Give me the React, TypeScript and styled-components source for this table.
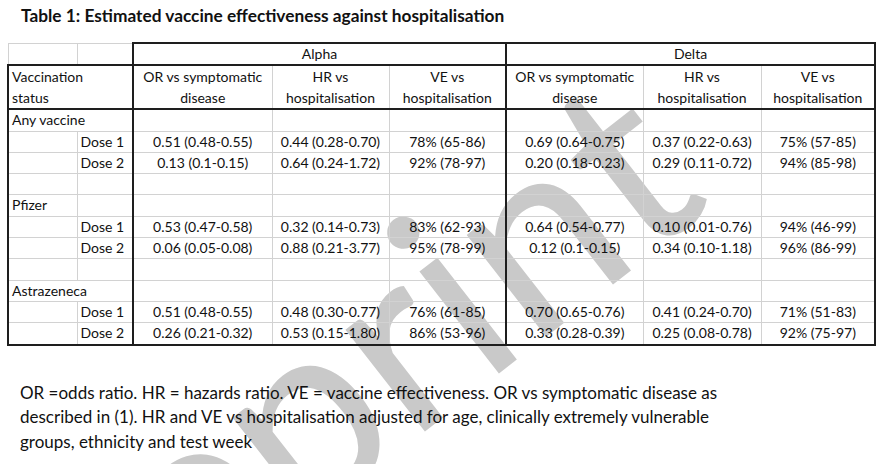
import React from "react";
import styled, { createGlobalStyle } from "styled-components";

const Global = createGlobalStyle`
  html, body { margin: 0; padding: 0; background: #fff; overflow: hidden; }
  body { font-family: Lato, "Liberation Sans", sans-serif; color: #141414; }
`;

const Page = styled.div`
  position: relative;
  width: 886px;
  height: 464px;
  overflow: hidden;
  background: #fff;
`;

const Watermark = styled.div`
  position: absolute;
  left: -135px;
  top: 582px;
  transform-origin: 0 0;
  transform: rotate(-38deg);
  font: 400 255px/1 Lato, "Liberation Sans", sans-serif;
  color: #c9c9c9;
  white-space: nowrap;
  pointer-events: none;
  user-select: none;
  z-index: 0;
`;

const Content = styled.div`
  position: relative;
  z-index: 1;
  display: flex;
  flex-direction: column;
  align-items: flex-start;
  padding: 6px 0 0 7px;
`;

const Title = styled.h1`
  margin: 0 0 0 14px;
  font: 700 17.3px/20px Lato, "Liberation Sans", sans-serif;
  color: #111;
`;

const Grid = styled.table`
  border-collapse: collapse;
  table-layout: fixed;
  width: 868px;
  margin-top: 16px;
  font: 400 14px Lato, "Liberation Sans", sans-serif;
  color: #111;
`;

const BLACK = "2px solid #1e1e1e";
const GRAY = "1px solid #d2d2d2";

type CellProps = {
  $bl?: boolean;
  $br?: boolean;
  $bt?: boolean;
  $bb?: boolean;
  $tall?: boolean;
  $align?: "left" | "center";
};

const Cell = styled.td<CellProps>`
  height: 20.3px;
  padding: 0 3px;
  line-height: ${(p) => (p.$tall ? "21px" : "20.3px")};
  white-space: nowrap;
  overflow: visible;
  text-align: ${(p) => p.$align ?? "center"};
  border-left: ${(p) => (p.$bl ? BLACK : GRAY)};
  border-right: ${(p) => (p.$br ? BLACK : GRAY)};
  border-top: ${(p) => (p.$bt ? BLACK : GRAY)};
  border-bottom: ${(p) => (p.$bb ? BLACK : GRAY)};
`;

const Footnote = styled.p`
  margin: 35px 0 0 13px;
  font: 400 17px/24.5px Lato, "Liberation Sans", sans-serif;
  color: #111;
`;

const widths = [69, 56, 139, 117, 117, 137, 118, 114];

type DataRow = { name?: string; span?: boolean; dose?: string; values?: string[] };

const rows: DataRow[] = [
  { name: "Any vaccine", span: true },
  { dose: "Dose 1", values: ["0.51 (0.48-0.55)", "0.44 (0.28-0.70)", "78% (65-86)", "0.69 (0.64-0.75)", "0.37 (0.22-0.63)", "75% (57-85)"] },
  { dose: "Dose 2", values: ["0.13 (0.1-0.15)", "0.64 (0.24-1.72)", "92% (78-97)", "0.20 (0.18-0.23)", "0.29 (0.11-0.72)", "94% (85-98)"] },
  {},
  { name: "Pfizer" },
  { dose: "Dose 1", values: ["0.53 (0.47-0.58)", "0.32 (0.14-0.73)", "83% (62-93)", "0.64 (0.54-0.77)", "0.10 (0.01-0.76)", "94% (46-99)"] },
  { dose: "Dose 2", values: ["0.06 (0.05-0.08)", "0.88 (0.21-3.77)", "95% (78-99)", "0.12 (0.1-0.15)", "0.34 (0.10-1.18)", "96% (86-99)"] },
  {},
  { name: "Astrazeneca", span: true },
  { dose: "Dose 1", values: ["0.51 (0.48-0.55)", "0.48 (0.30-0.77)", "76% (61-85)", "0.70 (0.65-0.76)", "0.41 (0.24-0.70)", "71% (51-83)"] },
  { dose: "Dose 2", values: ["0.26 (0.21-0.32)", "0.53 (0.15-1.80)", "86% (53-96)", "0.33 (0.28-0.39)", "0.25 (0.08-0.78)", "92% (75-97)"] },
];

const subHeads = [
  ["OR vs symptomatic", "disease"],
  ["HR vs", "hospitalisation"],
  ["VE vs", "hospitalisation"],
];

export default function App() {
  return (
    <Page>
      <Global />
      <Watermark aria-hidden="true">Preprint</Watermark>
      <Content>
        <Title>Table 1: Estimated vaccine effectiveness against hospitalisation</Title>
        <Grid>
          <colgroup>
            {widths.map((w, i) => (
              <col key={i} style={{ width: w }} />
            ))}
          </colgroup>
          <tbody>
            <tr>
              <Cell />
              <Cell />
              <Cell colSpan={3} $bl $bt $br $bb>Alpha</Cell>
              <Cell colSpan={3} $bl $bt $br $bb>Delta</Cell>
            </tr>
            <tr>
              <Cell colSpan={2} $tall $align="left" $bl $bt $bb $br>
                Vaccination
                <br />
                status
              </Cell>
              {[0, 1].map((g) =>
                subHeads.map((h, i) => (
                  <Cell key={`${g}-${i}`} $tall $bt $bb $bl={i === 0} $br={g === 1 && i === 2}>
                    {h[0]}
                    <br />
                    {h[1]}
                  </Cell>
                ))
              )}
            </tr>
            {rows.map((r, ri) => {
              const last = ri === rows.length - 1;
              return (
                <tr key={ri}>
                  {r.span ? (
                    <Cell colSpan={2} $align="left" $bl $br $bb={last}>{r.name}</Cell>
                  ) : (
                    <>
                      <Cell $align="left" $bl $bb={last}>{r.name}</Cell>
                      <Cell $align="left" $br $bb={last}>{r.dose}</Cell>
                    </>
                  )}
                  {Array.from({ length: 6 }).map((_, ci) => (
                    <Cell key={ci} $bl={ci === 0 || ci === 3} $br={ci === 5} $bb={last}>
                      {r.values?.[ci]}
                    </Cell>
                  ))}
                </tr>
              );
            })}
          </tbody>
        </Grid>
        <Footnote>
          OR =odds ratio. HR = hazards ratio. VE = vaccine effectiveness. OR vs symptomatic disease as
          <br />
          described in (1). HR and VE vs hospitalisation adjusted for age, clinically extremely vulnerable
          <br />
          groups, ethnicity and test week
        </Footnote>
      </Content>
    </Page>
  );
}
